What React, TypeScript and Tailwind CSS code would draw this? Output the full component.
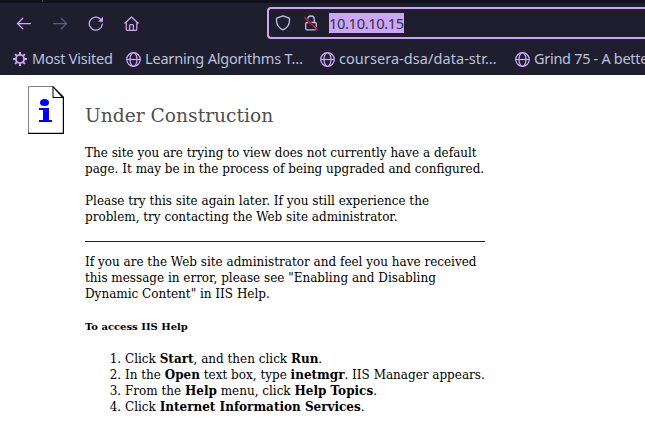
import type { ReactNode } from "react";

function Globe() {
  return (
    <svg width="15" height="15" viewBox="0 0 15 15" fill="none" stroke="#cba6f7" strokeWidth="1.25" className="shrink-0">
      <circle cx="7.5" cy="7.5" r="6.8" />
      <ellipse cx="7.5" cy="7.5" rx="3.5" ry="6.8" />
      <path d="M.7 7.5h13.6" />
    </svg>
  );
}

function Gear() {
  return (
    <svg width="14" height="14" viewBox="0 0 14 14" fill="none" stroke="#cba6f7" className="shrink-0">
      <circle cx="7" cy="7" r="4.1" strokeWidth="1.9" />
      <path strokeWidth="2" d="M7 0v2.6M7 11.4V14M0 7h2.6M11.4 7H14M2.1 2.1l1.8 1.8M10.1 10.1l1.8 1.8M11.9 2.1l-1.8 1.8M3.9 10.1l-1.8 1.8" />
    </svg>
  );
}

function Bookmark({ icon, width, children }: { icon: ReactNode; width: string; children: string }) {
  return (
    <div className={`flex shrink-0 items-center whitespace-nowrap ${width}`}>
      {icon}
      <span>{children}</span>
    </div>
  );
}

function Toolbar() {
  return (
    <div className="flex h-[39px] items-start">
      <div className="flex w-[267px] shrink-0 gap-5 pt-[7px] pl-4">
        <svg width="16" height="16" viewBox="0 0 16 16" fill="none" stroke="#cba6f7" strokeWidth="1.25" strokeLinecap="round" strokeLinejoin="round">
          <path d="M14.5 7.5H1.5M6.8 2.2L1.5 7.5l5.3 5.3" />
        </svg>
        <svg width="16" height="16" viewBox="0 0 16 16" fill="none" stroke="#65557f" strokeWidth="1.25" strokeLinecap="round" strokeLinejoin="round">
          <path d="M1.5 7.5h13M9.2 2.2l5.3 5.3-5.3 5.3" />
        </svg>
        <svg width="16" height="16" viewBox="0 0 16 16" fill="none" stroke="#cba6f7" strokeWidth="1.3" strokeLinecap="round">
          <path d="M12.6 3.2A6.5 6.5 0 1 0 14.3 8" />
          <path d="M15 .8v5h-5z" fill="#cba6f7" stroke="none" />
        </svg>
        <svg width="16" height="16" viewBox="0 0 16 16" fill="none" stroke="#cba6f7" strokeWidth="1.25" strokeLinecap="round" strokeLinejoin="round">
          <path d="M.8 7.2L7.5 1l6.7 6.2M2.2 6v7.3q0 1 1 1h8.6q1 0 1-1V6M5.6 14V9.7q0-1 1-1h1.8q1 0 1 1V14" />
        </svg>
      </div>
      <div className="-mt-[2px] flex h-8 flex-1 items-center rounded-l border-2 border-r-0 border-[#cba6f7] pl-[6px]">
        <svg width="16" height="16" viewBox="0 0 16 16" fill="none" stroke="#bac2de" strokeWidth="1.3" strokeLinejoin="round">
          <path d="M8 .9l6.3 2.3c.8 5-1.7 9.5-6.3 11.6C3.4 12.7.9 8.2 1.7 3.2z" />
        </svg>
        <svg width="16" height="16" viewBox="0 0 16 16" fill="none" stroke="#bac2de" strokeWidth="1.3" className="ml-3">
          <rect x="2.7" y="7.5" width="10.6" height="7.3" rx="1.3" />
          <path d="M4.7 7.500V4.300a3.300 3.300 0 0 1 6.600 0V7.500" />
          <path d="M1.200 2.200l13.500 12.700" stroke="#1e1e2e" strokeWidth="2.500" />
          <path d="M1.200 2.200l13.500 12.700" stroke="#e0183c" strokeWidth="1.400" />
        </svg>
        <span className="ml-[10px] h-5 w-[75px] bg-[#cba6f7] text-[14.67px] leading-5 tracking-[-0.36px] text-[#313244]">10.10.10.15</span>
      </div>
    </div>
  );
}

function DocumentIcon() {
  return (
    <svg width="36" height="48" viewBox="0 0 36 48" className="shrink-0">
      <path d="M.5 .5H25L35.500 11V47.500H.5z" fill="#fff" stroke="#808080" />
      <path d="M25 0L36 11V48H0V46.800H34.800V12H24.500V0z" fill="#000" />
      <path d="M25.500 2L33.500 11H25.500z" fill="#fff" />
      <ellipse cx="16.500" cy="16.500" rx="4.500" ry="3.500" fill="#00f" />
      <path d="M11 22h10v12h3v2H11v-2h4V24h-4z" fill="#00f" />
    </svg>
  );
}

export default function App() {
  return (
    <div className="h-[436px] w-[645px] overflow-hidden bg-white">
      <header className="h-[75px] overflow-hidden bg-[#1e1e2e] font-['Noto_Sans',sans-serif] text-[14.5px] text-[#bac2de]">
        <div className="h-[3px] bg-[#11111b] pl-[42px]">
          <div className="h-[2px] w-px bg-[#45475a]" />
        </div>
        <div className="h-[6px]" />
        <Toolbar />
        <nav className="flex h-[22px] items-center pl-[13px]">
          <Bookmark icon={<Gear />} width="w-[113px] gap-[5px] tracking-[-0.22px]">Most Visited</Bookmark>
          <Bookmark icon={<Globe />} width="w-[194px] gap-1 tracking-[-0.18px]">Learning Algorithms T…</Bookmark>
          <Bookmark icon={<Globe />} width="w-[195px] gap-1 tracking-[0.06px]">coursera-dsa/data-str…</Bookmark>
          <Bookmark icon={<Globe />} width="w-[143px] gap-1 tracking-[-0.3px]">Grind 75 - A bette</Bookmark>
        </nav>
      </header>
      <main className="flex gap-[21px] pt-[11px] pl-7">
        <DocumentIcon />
        <article className="w-[420px] whitespace-nowrap font-['DejaVu_Serif',serif] text-[12px] leading-4 text-black">
          <h1 className="mt-[18px] text-[18.67px] leading-6 text-[#4e4e4e]">Under Construction</h1>
          <p className="mt-[17px]">The site you are trying to view does not currently have a default<br />page. It may be in the process of being upgraded and configured.</p>
          <p className="mt-4">Please try this site again later. If you still experience the<br />problem, try contacting the Web site administrator.</p>
          <hr className="mt-4 w-[400px] border-t border-[#0000ff]" />
          <p className="mt-3">If you are the Web site administrator and feel you have received<br />this message in error, please see "Enabling and Disabling<br />Dynamic Content" in IIS Help.</p>
          <h2 className="mt-[17px] text-[10px] leading-4 font-bold">To access IIS Help</h2>
          <ol className="mt-4 list-decimal pl-10">
            <li>Click <b>Start</b>, and then click <b>Run</b>.</li>
            <li>In the <b>Open</b> text box, type <b>inetmgr</b>. IIS Manager appears.</li>
            <li>From the <b>Help</b> menu, click <b>Help Topics</b>.</li>
            <li>Click <b>Internet Information Services</b>.</li>
          </ol>
        </article>
      </main>
    </div>
  );
}
